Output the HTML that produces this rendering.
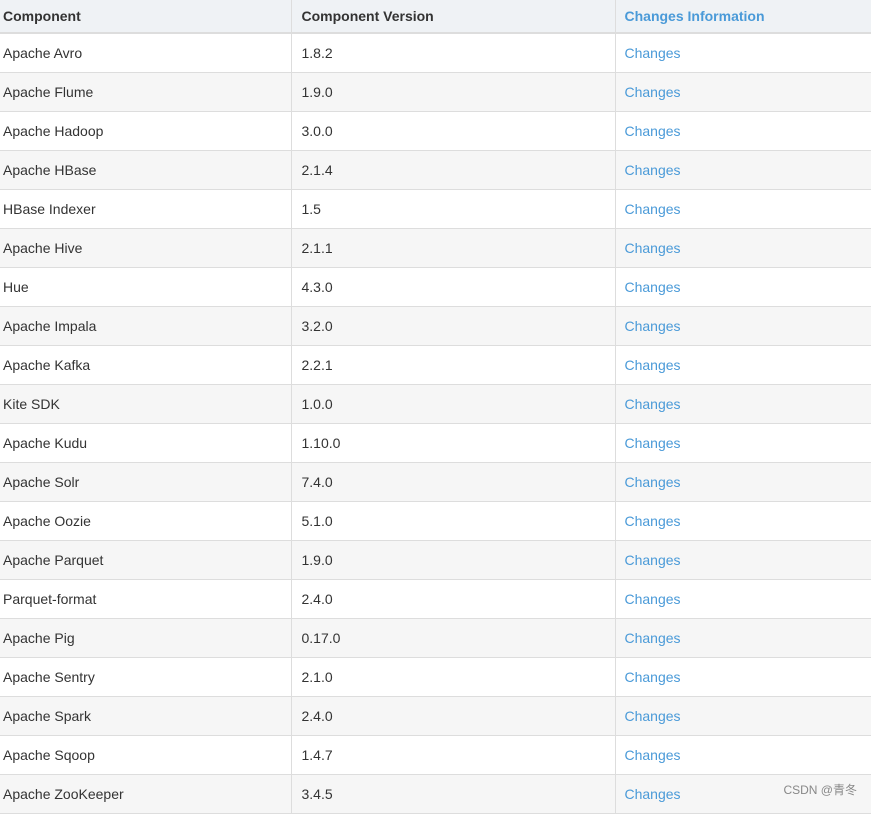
<!DOCTYPE html>
<html><head><meta charset="utf-8"><style>
body{margin:0;background:#fff;overflow:hidden;width:871px;height:804px;position:relative}
table{position:absolute;left:-7px;top:0;border-collapse:collapse;table-layout:fixed;width:885px;font-family:"Liberation Sans",Arial,sans-serif;font-size:14px;color:#333}
td,th{height:38px;padding:0 0 0 10px;border-bottom:1px solid #ddd;text-align:left;vertical-align:middle;white-space:nowrap}
th{height:32px;background:#eff2f5;font-weight:bold;border-bottom:2px solid #ddd}
.c1{width:288px}
.c2{width:313px;border-left:1px solid #ddd}
.c3{width:254px;border-left:1px solid #ddd;padding-left:9px}
th.c3,td.c3{color:#4a9ad8}
tr:nth-child(odd) td{background:#f6f6f6}
.wm{position:absolute;right:14px;top:781px;font-family:"Liberation Sans","Noto Sans CJK SC",sans-serif;font-size:12px;color:#888}
</style></head><body>
<table>
<colgroup><col style="width:298px"><col style="width:324px"><col style="width:263px"></colgroup>
<tr><th class="c1">Component</th><th class="c2">Component Version</th><th class="c3">Changes Information</th></tr>
<tr><td class="c1">Apache Avro</td><td class="c2">1.8.2</td><td class="c3">Changes</td></tr>
<tr><td class="c1">Apache Flume</td><td class="c2">1.9.0</td><td class="c3">Changes</td></tr>
<tr><td class="c1">Apache Hadoop</td><td class="c2">3.0.0</td><td class="c3">Changes</td></tr>
<tr><td class="c1">Apache HBase</td><td class="c2">2.1.4</td><td class="c3">Changes</td></tr>
<tr><td class="c1">HBase Indexer</td><td class="c2">1.5</td><td class="c3">Changes</td></tr>
<tr><td class="c1">Apache Hive</td><td class="c2">2.1.1</td><td class="c3">Changes</td></tr>
<tr><td class="c1">Hue</td><td class="c2">4.3.0</td><td class="c3">Changes</td></tr>
<tr><td class="c1">Apache Impala</td><td class="c2">3.2.0</td><td class="c3">Changes</td></tr>
<tr><td class="c1">Apache Kafka</td><td class="c2">2.2.1</td><td class="c3">Changes</td></tr>
<tr><td class="c1">Kite SDK</td><td class="c2">1.0.0</td><td class="c3">Changes</td></tr>
<tr><td class="c1">Apache Kudu</td><td class="c2">1.10.0</td><td class="c3">Changes</td></tr>
<tr><td class="c1">Apache Solr</td><td class="c2">7.4.0</td><td class="c3">Changes</td></tr>
<tr><td class="c1">Apache Oozie</td><td class="c2">5.1.0</td><td class="c3">Changes</td></tr>
<tr><td class="c1">Apache Parquet</td><td class="c2">1.9.0</td><td class="c3">Changes</td></tr>
<tr><td class="c1">Parquet-format</td><td class="c2">2.4.0</td><td class="c3">Changes</td></tr>
<tr><td class="c1">Apache Pig</td><td class="c2">0.17.0</td><td class="c3">Changes</td></tr>
<tr><td class="c1">Apache Sentry</td><td class="c2">2.1.0</td><td class="c3">Changes</td></tr>
<tr><td class="c1">Apache Spark</td><td class="c2">2.4.0</td><td class="c3">Changes</td></tr>
<tr><td class="c1">Apache Sqoop</td><td class="c2">1.4.7</td><td class="c3">Changes</td></tr>
<tr><td class="c1">Apache ZooKeeper</td><td class="c2">3.4.5</td><td class="c3">Changes</td></tr>
</table>
<div class="wm">CSDN @青冬</div>
</body></html>
